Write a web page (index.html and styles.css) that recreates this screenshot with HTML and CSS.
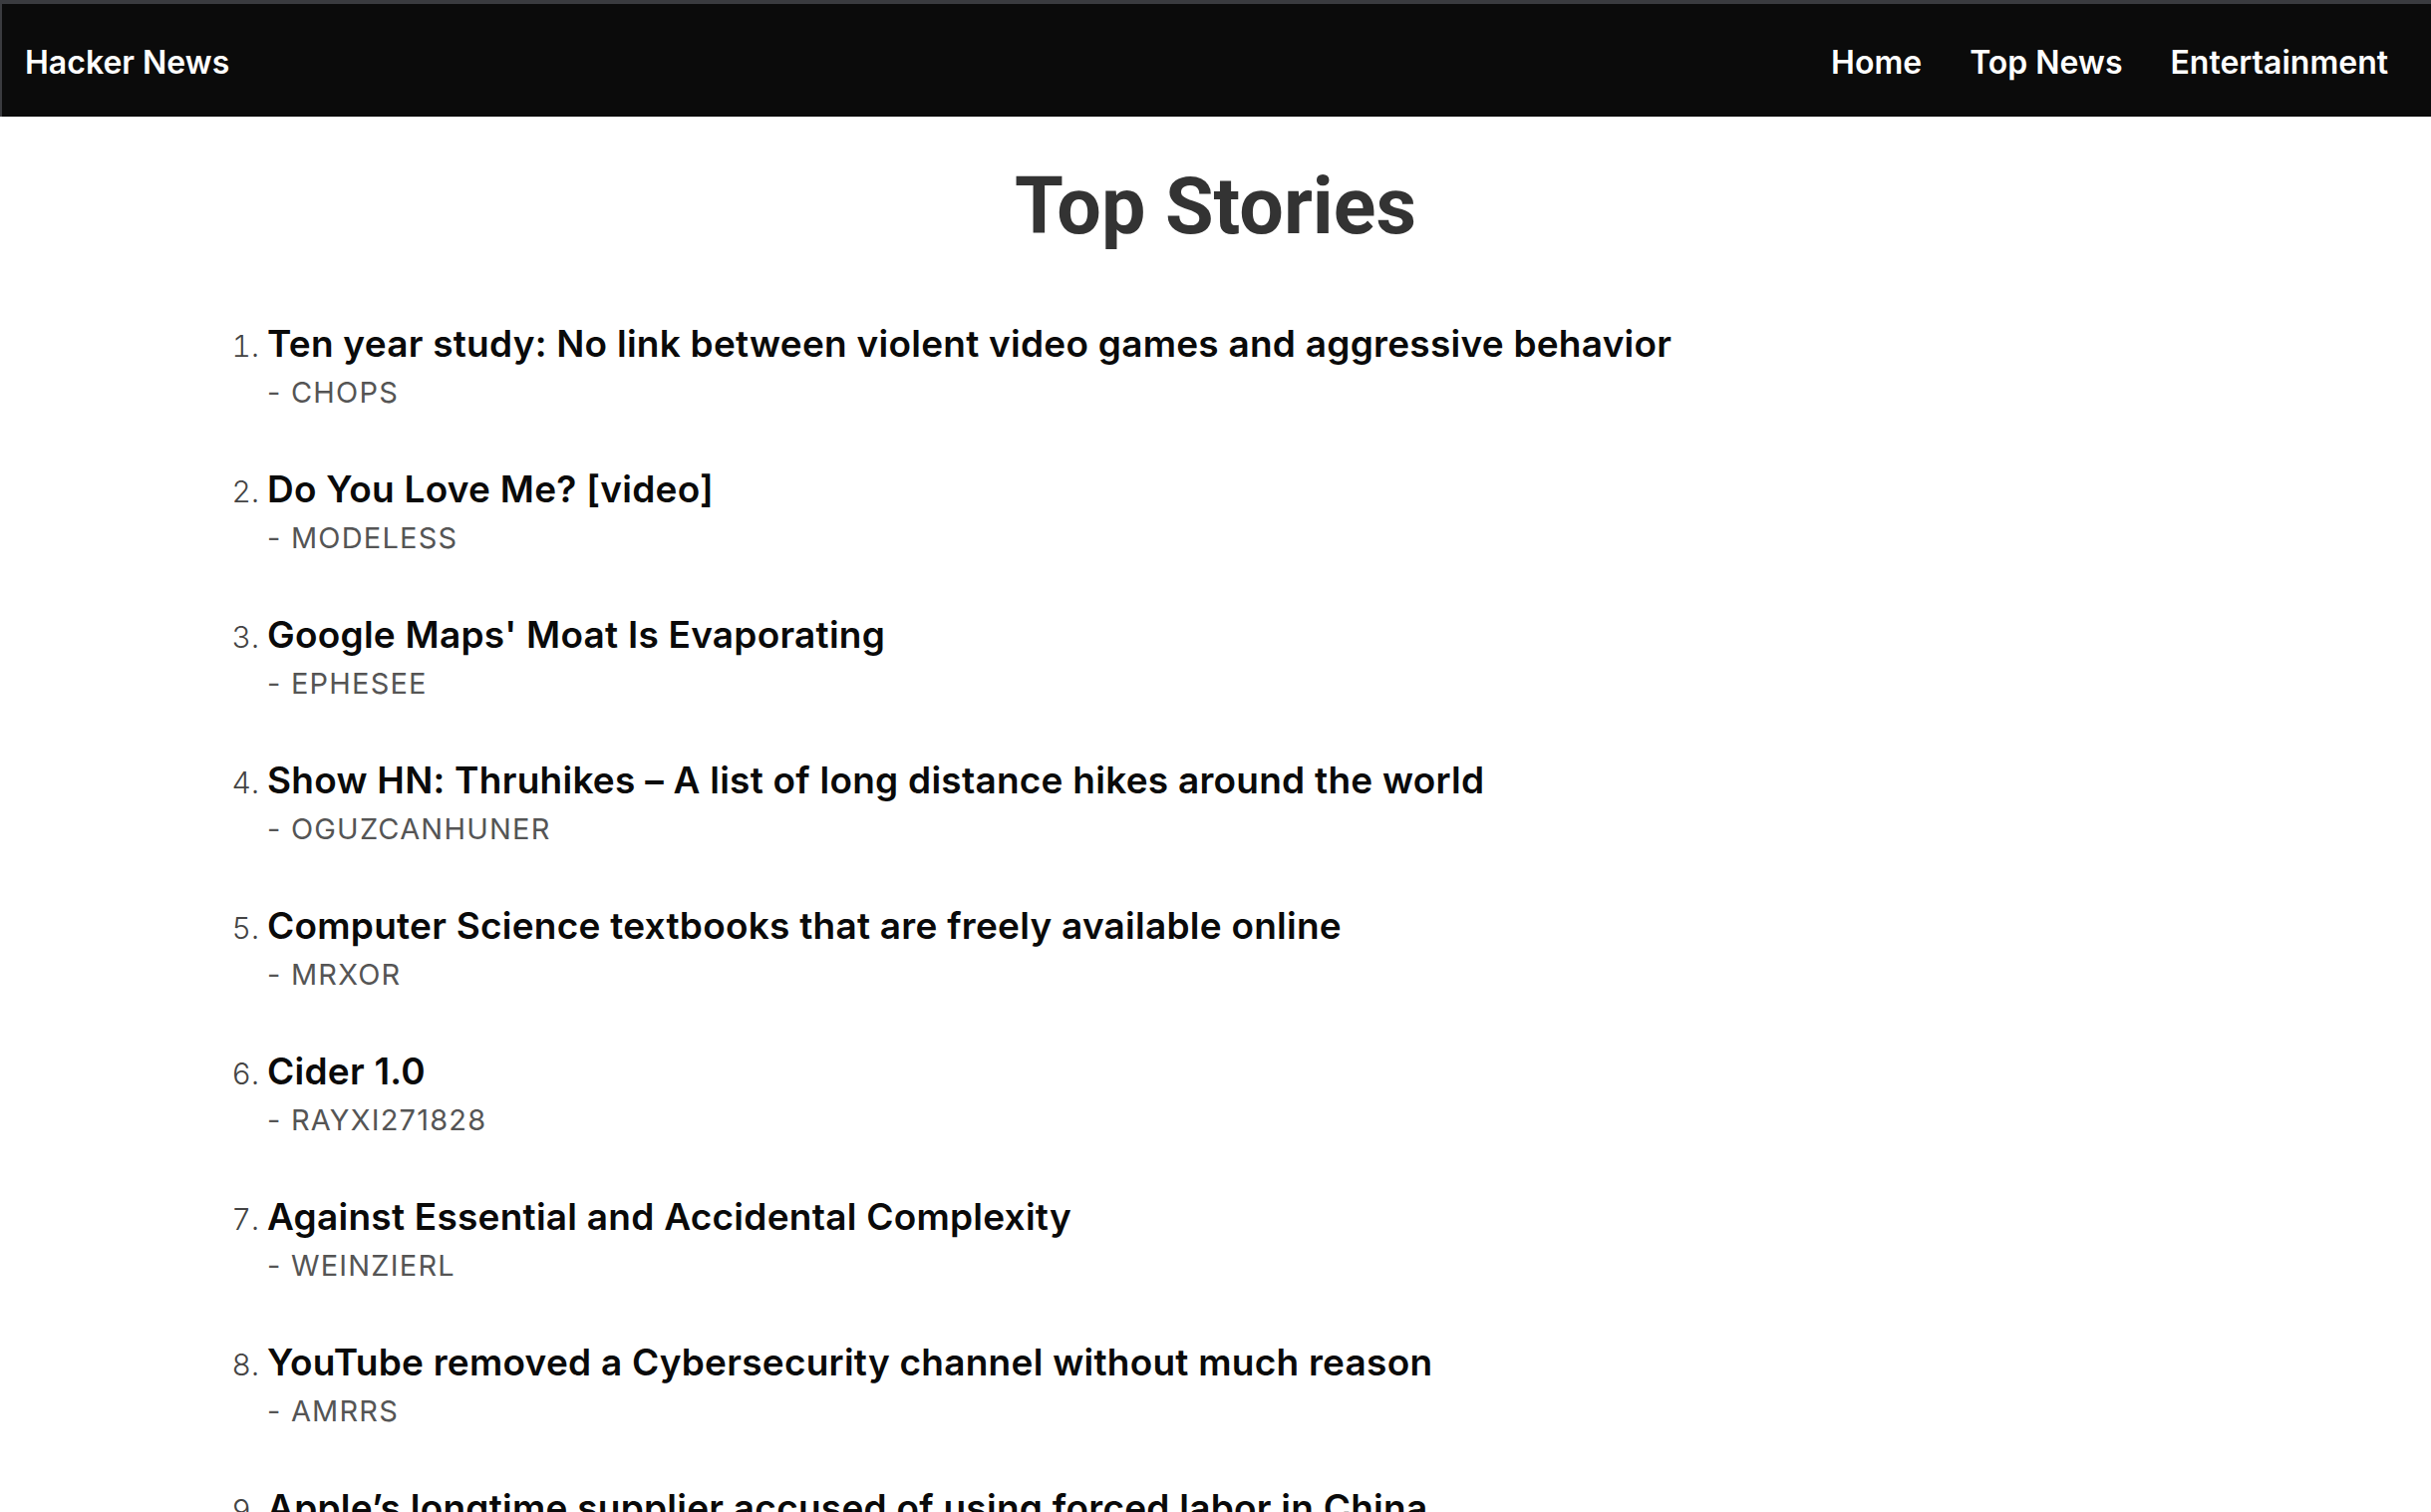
FILE: index.html
```html
<!DOCTYPE html>
<html lang="en">
<head>
<meta charset="utf-8">
<title>Hacker News</title>
<link rel="stylesheet" href="styles.css">
</head>
<body>
<header class="topbar">
  <a class="brand" href="#">Hacker News</a>
  <nav class="nav">
    <a class="nav-link" href="#">Home</a>
    <a class="nav-link" href="#">Top News</a>
    <a class="nav-link" href="#">Entertainment</a>
  </nav>
</header>
<main class="page">
  <h1 class="page-title">Top Stories</h1>
  <ol class="stories">
    <li class="story"><a class="story-title" href="#">Ten year study: No link between violent video games and aggressive behavior</a><div class="story-author">- chops</div></li>
    <li class="story"><a class="story-title" href="#">Do You Love Me? [video]</a><div class="story-author">- modeless</div></li>
    <li class="story"><a class="story-title" href="#">Google Maps' Moat Is Evaporating</a><div class="story-author">- ephesee</div></li>
    <li class="story"><a class="story-title" href="#">Show HN: Thruhikes – A list of long distance hikes around the world</a><div class="story-author">- oguzcanhuner</div></li>
    <li class="story"><a class="story-title" href="#">Computer Science textbooks that are freely available online</a><div class="story-author">- mrxor</div></li>
    <li class="story"><a class="story-title" href="#">Cider 1.0</a><div class="story-author">- rayxi271828</div></li>
    <li class="story"><a class="story-title" href="#">Against Essential and Accidental Complexity</a><div class="story-author">- weinzierl</div></li>
    <li class="story"><a class="story-title" href="#">YouTube removed a Cybersecurity channel without much reason</a><div class="story-author">- amrrs</div></li>
    <li class="story"><a class="story-title" href="#">Apple’s longtime supplier accused of using forced labor in China</a><div class="story-author">- pseudolus</div></li>
  </ol>
</main>
</body>
</html>
```

FILE: styles.css
```css
html, body {
  margin: 0;
  padding: 0;
  background: #ffffff;
}

body {
  font-family: Inter, "Noto Sans", "Liberation Sans", sans-serif;
}

.topbar {
  height: 108px;
  border-top: 4px solid #3a3b3f;
  border-left: 2px solid #3a3b3f;
  background: #0b0b0b;
  display: flex;
  align-items: center;
  justify-content: space-between;
  padding: 5px 43px 0 23px;
}

.brand,
.nav-link {
  color: #ffffff;
  text-decoration: none;
  font-family: Inter, "Liberation Sans", sans-serif;
  font-weight: 600;
  font-size: 32px;
  line-height: 40px;
}

.nav {
  display: flex;
  gap: 48px;
}

.page {
  padding: 0;
}

.page-title {
  margin: 42px 0 0;
  text-align: center;
  font-family: Roboto, "Liberation Sans", sans-serif;
  font-weight: 700;
  font-size: 79px;
  line-height: 96px;
  color: #333333;
}

.stories {
  margin: 63px 0 0;
  padding-left: 268px;
}

.story {
  font-size: 30px;
  font-weight: 300;
  color: #444444;
  margin-bottom: 48px;
}

.story::marker {
  color: #444444;
  font-weight: 300;
}

.story-title {
  display: block;
  font-size: 37px;
  font-weight: 600;
  letter-spacing: 0.25px;
  line-height: 54px;
  color: #0a0a0a;
  text-decoration: none;
}

.story-author {
  font-size: 29px;
  font-weight: 400;
  letter-spacing: 1.2px;
  line-height: 44px;
  color: #555555;
  text-transform: uppercase;
}
```
